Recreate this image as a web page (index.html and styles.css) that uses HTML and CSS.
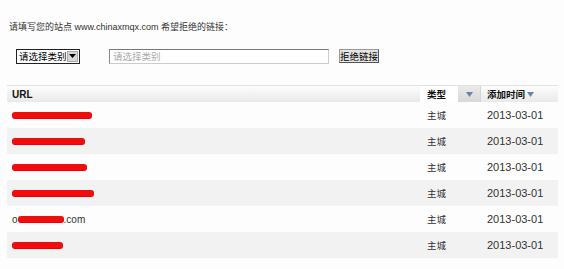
FILE: index.html
```html
<!DOCTYPE html>
<html>
<head>
<meta charset="utf-8">
<link rel="stylesheet" href="styles.css">
</head>
<body>
<div class="page">
  <p class="intro">请填写您的站点 www.chinaxmqx.com 希望拒绝的链接：</p>
  <div class="form">
    <div class="select"><span class="select-text">请选择类别</span><span class="select-btn"><svg width="7" height="4" viewBox="0 0 7 4"><path d="M0 0H7L3.5 4Z" fill="#000"/></svg></span></div>
    <div class="input">请选择类别</div>
    <div class="button">拒绝链接</div>
  </div>
  <div class="table">
    <div class="row head">
      <div class="c-url">URL</div>
      <div class="c-type">类型</div>
      <div class="c-sort"><svg width="7" height="5" viewBox="0 0 7 5"><path d="M0 0H7L3.5 5Z" fill="#6a84a8"/></svg></div>
      <div class="c-date">添加时间 <svg width="7" height="5" viewBox="0 0 7 5"><path d="M0 0H7L3.5 5Z" fill="#6a84a8"/></svg></div>
    </div>
    <div class="row">
      <div class="c-url"><span class="scribble w80"></span></div>
      <div class="c-type">主城</div><div class="c-sort"></div>
      <div class="c-date">2013-03-01</div>
    </div>
    <div class="row alt">
      <div class="c-url"><span class="scribble w73"></span></div>
      <div class="c-type">主城</div><div class="c-sort"></div>
      <div class="c-date">2013-03-01</div>
    </div>
    <div class="row">
      <div class="c-url"><span class="scribble w75"></span></div>
      <div class="c-type">主城</div><div class="c-sort"></div>
      <div class="c-date">2013-03-01</div>
    </div>
    <div class="row alt">
      <div class="c-url"><span class="scribble w82"></span></div>
      <div class="c-type">主城</div><div class="c-sort"></div>
      <div class="c-date">2013-03-01</div>
    </div>
    <div class="row">
      <div class="c-url"><span class="txt">o</span><span class="scribble w44"></span><span class="txt">.com</span></div>
      <div class="c-type">主城</div><div class="c-sort"></div>
      <div class="c-date">2013-03-01</div>
    </div>
    <div class="row alt">
      <div class="c-url"><span class="scribble w51"></span></div>
      <div class="c-type">主城</div><div class="c-sort"></div>
      <div class="c-date">2013-03-01</div>
    </div>
  </div>
</div>
</body>
</html>
```
FILE: styles.css
```css
* {
  box-sizing: border-box;
}
html, body {
  margin: 0;
  padding: 0;
  background: #fdfdfd;
}
.page {
  padding: 20px 6px 0 7px;
  font-family: "Noto Sans CJK SC", "Liberation Sans", sans-serif;
  font-size: 9.5px;
  color: #222;
}
.intro {
  margin: 0 0 0 2px;
  height: 15px;
  line-height: 15px;
  font-family: "Liberation Sans", "Noto Sans CJK SC", sans-serif;
  font-size: 9px;
  color: #333;
  white-space: nowrap;
}
.form {
  display: flex;
  align-items: center;
  margin-top: 13px;
  height: 16px;
  white-space: nowrap;
}
.select {
  margin-left: 9px;
  display: flex;
  align-items: center;
  height: 15px;
  width: 64px;
  border: 1px solid #222;
  background: #fff;
  font-size: 9.5px;
  color: #000;
}
.select-text {
  flex: 1;
  padding-left: 2px;
  line-height: 13px;
}
.select-btn {
  width: 12px;
  height: 11px;
  margin-right: 1px;
  background: #d8d8d8;
  border: 1px solid #aaa;
  display: flex;
  align-items: center;
  justify-content: center;
}
.input {
  margin-left: 29px;
  width: 220px;
  height: 15px;
  line-height: 13px;
  padding-left: 3px;
  border: 1px solid #ccc;
  border-top-color: #777;
  border-left-color: #888;
  background: #fff;
  color: #aaa;
  font-size: 9.5px;
}
.button {
  margin-left: 10px;
  width: 40px;
  height: 14px;
  line-height: 12px;
  text-align: center;
  border: 1px solid #999;
  border-right-color: #555;
  border-bottom-color: #555;
  background: #e4e4e4;
  color: #000;
  font-size: 9.5px;
}
.table {
  margin-top: 21px;
  width: 551px;
}
.row {
  display: flex;
  height: 26px;
  align-items: center;
}
.row.alt {
  background: #f2f2f2;
}
.row.head {
  height: 17px;
  border-top: 1px solid #e2e2e2;
  background: linear-gradient(#fdfdfd, #e9e9e9);
  font-weight: bold;
  color: #111;
}
.c-url {
  width: 413px;
  padding-left: 5px;
  display: flex;
  align-items: center;
}
.head .c-url {
  font-family: "Liberation Sans", sans-serif;
  font-size: 10px;
}
.c-type {
  width: 38px;
  padding-left: 7px;
  color: #333;
}
.c-sort {
  width: 22px;
  height: 100%;
  display: flex;
  align-items: center;
  justify-content: center;
}
.head .c-type {
  height: 100%;
  display: flex;
  align-items: center;
  background: #fff;
  color: #111;
}
.head .c-sort {
  background: linear-gradient(#eaeaea, #d8d8d8);
}
.c-date {
  flex: 1;
  padding-left: 7px;
  font-family: "Liberation Sans", sans-serif;
  font-size: 11px;
  color: #333;
}
.head .c-date {
  height: 100%;
  display: flex;
  align-items: center;
  gap: 2px;
  padding-left: 6px;
  border-left: 1px solid #d4d4d4;
  font-family: "Noto Sans CJK SC", sans-serif;
  font-size: 9.5px;
  color: #111;
}
.scribble {
  display: inline-block;
  height: 6px;
  border-radius: 3px;
  background: #f20d0d;
  box-shadow: 0 1px 0 #e00;
}
.txt {
  font-family: "Liberation Sans", sans-serif;
  font-size: 10px;
  color: #333;
}
.w80 { width: 80px; }
.w73 { width: 73px; }
.w75 { width: 75px; }
.w82 { width: 82px; }
.w44 { width: 46px; }
.w51 { width: 51px; }
```
